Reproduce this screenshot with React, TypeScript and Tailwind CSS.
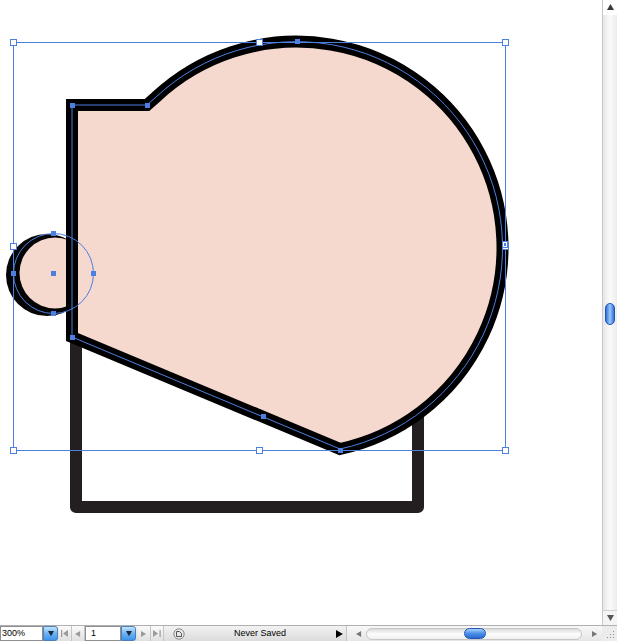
import React from 'react';

const SEL = '#4d7fe0';
const PINK = '#f5d8ce';
const SHAPE = 'M72 105 L147 105 L156 97 A206 206 0 1 1 340 449 L72 337 Z';

const anchors: [number, number][] = [
  [72, 105],
  [147, 105],
  [297, 41],
  [340, 450],
  [72, 337],
  [263, 416],
  [53, 233],
  [93, 273],
  [53, 313],
  [13, 273],
  [53, 273],
];

const handles: [number, number][] = [
  [13, 42],
  [259, 42],
  [505, 42],
  [13, 246],
  [505, 246],
  [13, 450],
  [259, 450],
  [505, 450],
];

function Artwork() {
  return (
    <svg width={602} height={625} viewBox="0 0 602 625" className="block">
      {/* back rectangle */}
      <rect x={76} y={300} width={342} height={207} fill="none" stroke="#231f20" strokeWidth={12} strokeLinejoin="round" />
      {/* small circle, offset stroke */}
      <circle cx={47} cy={275} r={41} fill="#050505" />
      <circle cx={55} cy={273} r={35.5} fill={PINK} />
      {/* main shape */}
      <path d={SHAPE} fill={PINK} stroke="#000" strokeWidth={12} strokeLinejoin="miter" strokeMiterlimit={10} />

      {/* selection */}
      <g fill="none" stroke={SEL} strokeWidth={1}>
        <rect x={13.5} y={42.5} width={492} height={408} />
        <path d={SHAPE} />
        <circle cx={53.5} cy={273.5} r={40} />
      </g>
      {anchors.map(([x, y], i) => (
        <rect key={i} x={x - 2} y={y - 2} width={5} height={5} fill={SEL} />
      ))}
      {handles.map(([x, y], i) => (
        <rect key={i} x={x - 2.5} y={y - 2.5} width={6} height={6} fill="#fff" stroke={SEL} strokeWidth={1} />
      ))}
      <rect x={502.5} y={241.5} width={5} height={6} fill="#fff" stroke={SEL} />
      <rect x={504} y={243} width={2} height={3} fill={SEL} />
    </svg>
  );
}

function Tri({ dir, color = '#3a3a3a', size = 7 }: { dir: 'up' | 'down' | 'left' | 'right'; color?: string; size?: number }) {
  const pts = {
    up: '0,6 3.5,0 7,6',
    down: '0,0 7,0 3.5,6',
    left: '6,0 6,7 0,3.5',
    right: '0,0 6,3.5 0,7',
  }[dir];
  return (
    <svg width={size} height={size} viewBox="0 0 7 7">
      <polygon points={pts} fill={color} />
    </svg>
  );
}

function BlueBtn() {
  return (
    <div className="flex h-full w-[15px] items-center justify-center rounded-r-[3px] border border-[#4a7fb8] bg-linear-to-b from-[#c3e3fc] via-[#6cb3f3] to-[#3d93ea]">
      <Tri dir="down" color="#1b2a3a" size={6} />
    </div>
  );
}

function GrayBtn({ children }: { children: React.ReactNode }) {
  return (
    <div className="flex h-full w-[13px] items-center justify-center border-r border-[#c4c4c4] bg-linear-to-b from-[#fbfbfb] to-[#e0e0e0]">
      {children}
    </div>
  );
}

function VScroll() {
  return (
    <div className="flex w-[15px] flex-col items-center border-l border-[#c8c8c8] bg-linear-to-r from-[#e6e6e6] via-[#fbfbfb] to-[#ececec]">
      <div className="flex h-[15px] w-full items-center justify-center bg-white">
        <Tri dir="up" size={7} />
      </div>
      <div className="flex flex-1 flex-col items-center">
        <div className="mt-[288px] h-[22px] w-[10px] rounded-full border border-[#1f56b8] bg-linear-to-r from-[#2e6fd6] via-[#9cc9fb] to-[#2e6fd6]" />
      </div>
      <div className="flex h-[15px] w-full items-center justify-center border-t border-[#d0d0d0] bg-[#f4f4f4]">
        <Tri dir="down" color="#555" size={7} />
      </div>
    </div>
  );
}

function StatusBar() {
  return (
    <div
      className="flex h-[16px] items-center border-t border-[#b0b0b0] bg-linear-to-b from-[#f2f2f2] to-[#dcdcdc] text-[9px] leading-none text-black"
      style={{ fontFamily: '"Liberation Sans", Arial, sans-serif' }}
    >
      <div className="flex h-full w-[43px] items-center border border-[#8f8f8f] bg-white pl-[1px]">300%</div>
      <BlueBtn />
      <div className="ml-[1px] flex h-full">
        <GrayBtn>
          <svg width={8} height={7} viewBox="0 0 8 7">
            <rect x={0} y={0} width={1.2} height={7} fill="#9a9a9a" />
            <polygon points="7,0 7,7 2,3.5" fill="#9a9a9a" />
          </svg>
        </GrayBtn>
        <GrayBtn>
          <Tri dir="left" color="#9a9a9a" size={6} />
        </GrayBtn>
      </div>
      <div className="flex h-full w-[36px] items-center border border-[#8f8f8f] bg-white pl-[5px]">1</div>
      <BlueBtn />
      <div className="ml-[2px] flex h-full">
        <GrayBtn>
          <Tri dir="right" color="#9a9a9a" size={6} />
        </GrayBtn>
        <GrayBtn>
          <svg width={8} height={7} viewBox="0 0 8 7">
            <polygon points="0,0 5,3.5 0,7" fill="#9a9a9a" />
            <rect x={6.5} y={0} width={1.2} height={7} fill="#9a9a9a" />
          </svg>
        </GrayBtn>
      </div>
      <div className="ml-[8px] flex h-full w-[14px] items-center justify-center">
        <svg width={12} height={12} viewBox="0 0 12 12">
          <circle cx={6} cy={6} r={5.2} fill="#e8e8e8" stroke="#8a8a8a" strokeWidth={1} />
          <path d="M3.5 3.5 L3.5 8.5 L8.5 8.5 M3.5 3.5 L6.5 3.5 L8.5 5.5 L8.5 8.5" fill="none" stroke="#555" strokeWidth={1} />
        </svg>
      </div>
      <div className="w-[148px] text-center">Never Saved</div>
      <div className="flex w-[12px] items-center justify-center">
        <Tri dir="right" color="#000" size={8} />
      </div>
      <div className="flex h-full flex-1 items-center border-l border-[#c4c4c4] bg-linear-to-b from-[#f8f8f8] to-[#e6e6e6] pl-[9px] pr-[4px]">
        <Tri dir="left" color="#777" size={6} />
        <div className="ml-[4px] flex h-[12px] flex-1 items-center rounded-full border border-[#c6c6c6] bg-linear-to-b from-[#dcdcdc] via-[#fdfdfd] to-[#f0f0f0]">
          <div className="ml-[97px] h-[11px] w-[22px] rounded-full border border-[#1f56b8] bg-linear-to-b from-[#a7d0fb] via-[#4b8ee8] to-[#2c6ad2]" />
        </div>
        <div className="ml-[10px]">
          <Tri dir="right" color="#777" size={6} />
        </div>
      </div>
      <div className="flex h-full w-[15px] items-end justify-end bg-[#ececec] p-[2px]">
        <svg width={9} height={9} viewBox="0 0 9 9">
          {[
            [8, 2], [8, 5], [8, 8], [5, 5], [5, 8], [2, 8],
          ].map(([x, y], i) => (
            <rect key={i} x={x - 1} y={y - 1} width={1} height={1} fill="#8a8a8a" />
          ))}
        </svg>
      </div>
    </div>
  );
}

export default function App() {
  return (
    <div className="flex h-[641px] w-[617px] flex-col overflow-hidden bg-white">
      <div className="flex h-[625px]">
        <div className="w-[602px] bg-white">
          <Artwork />
        </div>
        <VScroll />
      </div>
      <StatusBar />
    </div>
  );
}
